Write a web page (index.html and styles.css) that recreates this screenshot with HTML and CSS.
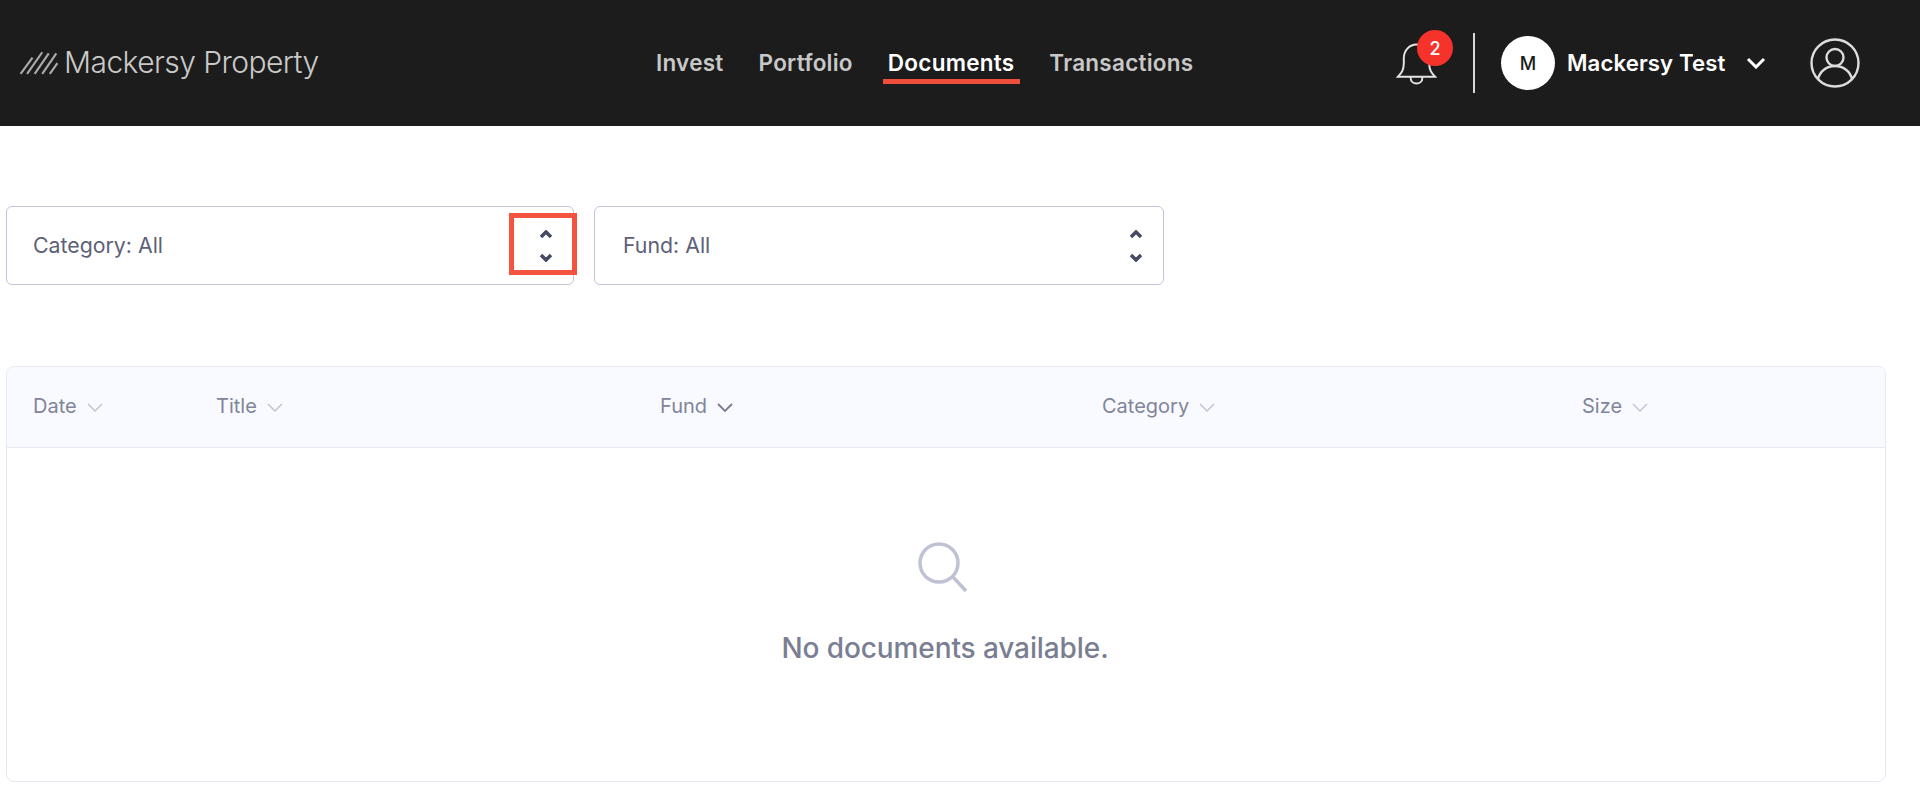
FILE: index.html
```html
<!DOCTYPE html>
<html lang="en">
<head>
<meta charset="utf-8">
<title>Documents</title>
<link rel="stylesheet" href="styles.css">
</head>
<body>
<header class="topbar">
  <div class="brand">
    <svg class="brand-mark" viewBox="0 0 36 24" aria-hidden="true"><path d="M1 23 12 8M7 23 21 3M14 23 27 4M21 23 34 4M28 23 35 13"/></svg>
    <span class="brand-name">Mackersy Property</span>
  </div>
  <nav class="nav">
    <a class="nav-link">Invest</a>
    <a class="nav-link">Portfolio</a>
    <a class="nav-link active">Documents</a>
    <a class="nav-link">Transactions</a>
  </nav>
  <div class="account">
    <div class="bell">
      <svg class="bell-icon" viewBox="0 0 42 46" aria-hidden="true"><path d="M2 37h38c-4-4-6-7-6-14v-5C34 10 28 4 21 4S8 10 8 18v5c0 7-2 10-6 14ZM15 38c0 4 3 6 6 6s6-2 6-6"/></svg>
      <span class="badge">2</span>
    </div>
    <span class="divider"></span>
    <span class="avatar">M</span>
    <span class="user-name">Mackersy Test</span>
    <svg class="user-chevron" viewBox="0 0 20 12" aria-hidden="true"><path d="m2 2 8 8 8-8"/></svg>
    <svg class="user-icon" viewBox="0 0 50 50" aria-hidden="true"><circle cx="25" cy="25" r="23.5"/><circle cx="25" cy="19.5" r="8.5"/><path d="M8 41c2-8 9-13 17-13s15 5 17 13"/></svg>
  </div>
</header>
<main class="content">
  <div class="filters">
    <div class="select">
      <span class="select-label">Category: All</span>
      <svg class="updown" viewBox="0 0 14 32" aria-hidden="true"><path d="m2 7 5-5 5 5M2 25l5 5 5-5"/></svg>
      <span class="highlight"></span>
    </div>
    <div class="select">
      <span class="select-label">Fund: All</span>
      <svg class="updown" viewBox="0 0 14 32" aria-hidden="true"><path d="m2 7 5-5 5 5M2 25l5 5 5-5"/></svg>
    </div>
  </div>
  <section class="table">
    <div class="thead">
      <div class="th">Date <svg class="sort" viewBox="0 0 16 10" aria-hidden="true"><path d="m1 1 7 7 7-7"/></svg></div>
      <div class="th">Title <svg class="sort" viewBox="0 0 16 10" aria-hidden="true"><path d="m1 1 7 7 7-7"/></svg></div>
      <div class="th">Fund <svg class="sort dark" viewBox="0 0 16 10" aria-hidden="true"><path d="m1 1 7 7 7-7"/></svg></div>
      <div class="th">Category <svg class="sort" viewBox="0 0 16 10" aria-hidden="true"><path d="m1 1 7 7 7-7"/></svg></div>
      <div class="th">Size <svg class="sort" viewBox="0 0 16 10" aria-hidden="true"><path d="m1 1 7 7 7-7"/></svg></div>
    </div>
    <div class="empty">
      <svg class="search" viewBox="0 0 50 52" aria-hidden="true"><circle cx="21" cy="21" r="19"/><path d="m35 35 13 14"/></svg>
      <p class="empty-text">No documents available.</p>
    </div>
  </section>
</main>
</body>
</html>
```
FILE: styles.css
```css
* { box-sizing: border-box; }
html, body { margin: 0; height: 100%; overflow: hidden; background: #fff; }
body { font-family: Inter, "Liberation Sans", sans-serif; }

.topbar {
  height: 126px;
  background: #1c1c1c;
  display: flex;
  align-items: center;
  padding-left: 19px;
}
.brand { width: 637px; display: flex; align-items: center; gap: 5px; margin-top: -2px; }
.brand-mark { width: 40px; height: 26px; fill: none; stroke: #a9a9a9; stroke-width: 2; }
.brand-name { color: #c9c9c9; font-size: 30px; font-weight: 300; letter-spacing: -0.55px; white-space: nowrap; }

.nav { display: flex; gap: 35px; width: 740px; margin-top: -2px; }
.nav-link {
  position: relative;
  color: #c8c8c8;
  font-size: 22.5px;
  font-weight: 600;
  letter-spacing: 0.25px;
  white-space: nowrap;
}
.nav-link.active { color: #fff; }
.nav-link.active::after {
  content: "";
  position: absolute;
  left: -5px; right: -6px; bottom: -8px;
  height: 5px;
  background: #ef4e3c;
}

.account { display: flex; align-items: center; flex: 1; }
.bell { position: relative; width: 41px; height: 46px; }
.bell-icon { width: 41px; height: 46px; fill: none; stroke: #e4e4e4; stroke-width: 2; }
.badge {
  position: absolute;
  left: 21px; top: -10px;
  width: 36px; height: 36px;
  border-radius: 50%;
  background: #f5332b;
  color: #fff;
  font-size: 18px;
  font-weight: 500;
  display: flex; align-items: center; justify-content: center;
}
.divider { width: 2px; height: 60px; background: #d8d8d8; margin-left: 36px; }
.avatar {
  width: 54px; height: 54px;
  margin-left: 26px;
  border-radius: 50%;
  background: #fff;
  color: #1c1c1c;
  font-size: 18px;
  font-weight: 500;
  display: flex; align-items: center; justify-content: center;
}
.user-name { margin: -2px 0 0 12px; color: #fff; font-size: 22.2px; font-weight: 600; letter-spacing: 0.1px; white-space: nowrap; }
.user-chevron { width: 20px; height: 12px; margin-left: 21px; fill: none; stroke: #fff; stroke-width: 3; }
.user-icon { width: 50px; height: 50px; margin-left: 44px; fill: none; stroke: #dcdcdc; stroke-width: 2.4; }

.content { padding: 80px 34px 0 6px; }
.filters { display: flex; gap: 20px; }
.select {
  position: relative;
  width: 568px;
  height: 79px;
  padding: 0 20px 0 26px;
  border: 1.5px solid #c2c5da;
  border-radius: 6px;
  display: flex;
  align-items: center;
  justify-content: space-between;
  color: #5d6178;
  font-size: 21.3px;
}
.select + .select { width: 570px; padding-left: 28px; }
.select-label { margin-top: -2px; }
.updown { width: 14px; height: 32px; fill: none; stroke: #474b61; stroke-width: 3.5; }
.highlight {
  position: absolute;
  left: 502px; top: 6px;
  width: 68px; height: 62px;
  border: 5px solid #f4533e;
}

.table {
  margin-top: 81px;
  width: 1880px;
  height: 416px;
  border: 1.5px solid #e6e8f5;
  border-radius: 8px;
  overflow: hidden;
}
.thead {
  height: 81px;
  background: #f9faff;
  border-bottom: 1.5px solid #e6e8f5;
  display: grid;
  grid-template-columns: 183px 444px 442px 480px 1fr;
  align-items: center;
  padding: 0 0 2px 26px;
}
.th { color: #81859a; font-size: 20px; display: flex; align-items: center; gap: 10px; }
.sort { width: 16px; height: 10px; margin-top: 4px; fill: none; stroke: #c0c3d4; stroke-width: 1.5; }
.sort.dark { stroke: #777b90; stroke-width: 1.8; }

.empty { display: flex; flex-direction: column; align-items: center; padding-top: 94px; margin-left: -2px; }
.search { width: 50px; height: 52px; fill: none; stroke: #bfc2d4; stroke-width: 3.5; margin-left: -5px; }
.empty-text { margin: 37px 0 0; color: #7a7e93; font-size: 28px; font-weight: 500; line-height: 34px; letter-spacing: -0.1px; }
```
